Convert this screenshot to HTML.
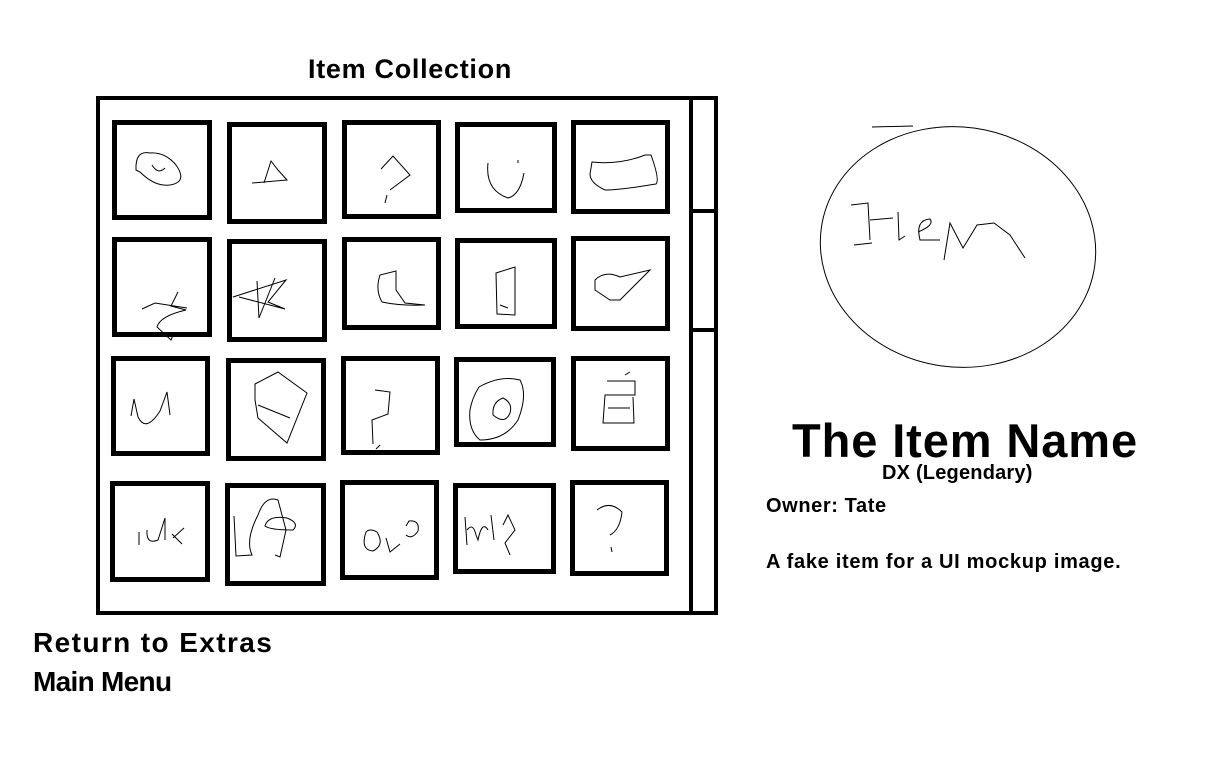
<!DOCTYPE html>
<html><head><style>
body{margin:0;width:1232px;height:758px;background:#fff;position:relative;overflow:hidden;font-family:"Liberation Sans",sans-serif;font-weight:bold;color:#000}
.t{position:absolute;white-space:nowrap;line-height:1}
.b{position:absolute;border:5px solid #000;box-sizing:border-box}
</style></head><body>
<div class="t" style="left:308px;top:56px;font-size:27px;letter-spacing:0.7px">Item Collection</div>
<div class="b" style="left:96px;top:96px;width:622px;height:519px;border-width:4px"></div>
<div style="position:absolute;left:689px;top:96px;width:4px;height:519px;background:#000"></div>
<div style="position:absolute;left:689px;top:209px;width:28px;height:4px;background:#000"></div>
<div style="position:absolute;left:689px;top:328px;width:28px;height:4px;background:#000"></div>

<div class="b" style="left:112px;top:120px;width:100px;height:100px"></div>
<div class="b" style="left:227px;top:122px;width:100px;height:102px"></div>
<div class="b" style="left:342px;top:120px;width:99px;height:99px"></div>
<div class="b" style="left:455px;top:122px;width:102px;height:91px"></div>
<div class="b" style="left:571px;top:120px;width:99px;height:94px"></div>

<div class="b" style="left:112px;top:237px;width:100px;height:100px"></div>
<div class="b" style="left:227px;top:239px;width:100px;height:103px"></div>
<div class="b" style="left:342px;top:237px;width:99px;height:93px"></div>
<div class="b" style="left:455px;top:238px;width:102px;height:91px"></div>
<div class="b" style="left:571px;top:236px;width:99px;height:95px"></div>

<div class="b" style="left:111px;top:356px;width:99px;height:100px"></div>
<div class="b" style="left:226px;top:358px;width:100px;height:103px"></div>
<div class="b" style="left:341px;top:356px;width:99px;height:99px"></div>
<div class="b" style="left:454px;top:357px;width:102px;height:90px"></div>
<div class="b" style="left:571px;top:356px;width:99px;height:95px"></div>

<div class="b" style="left:110px;top:481px;width:100px;height:101px"></div>
<div class="b" style="left:225px;top:483px;width:101px;height:103px"></div>
<div class="b" style="left:340px;top:480px;width:99px;height:100px"></div>
<div class="b" style="left:453px;top:483px;width:103px;height:91px"></div>
<div class="b" style="left:570px;top:480px;width:99px;height:96px"></div>

<svg style="position:absolute;left:0;top:0" width="1232" height="758" fill="none" stroke="#000" stroke-width="1">
<path d="M136 170 Q135 150 150 153 Q165 152 176 165 Q188 182 170 185 Q155 187 140 172 Z M152 165 Q158 175 165 168"/>
<path d="M252 183 L287 180 L278 170 L271 161 L264 183"/>
<path d="M381 169 L393 156 L410 175 L398 184 L390 190 M387 195 L385 203"/>
<path d="M488 163 Q485 190 508 198 Q520 195 524 173 M518 160 L518 163"/>
<path d="M592 162 Q620 165 645 155 L651 155 Q660 180 656 184 Q620 190 605 190 Q590 183 590 174 Z"/>
<path d="M142 309 L155 303 L187 308 M178 292 L171 306 L186 310 Q160 316 157 327 L171 340 L174 333"/>
<path d="M233 297 L286 280 L268 302 L285 309 L239 297 M257 281 L259 318 L275 278"/>
<path d="M380 275 L396 271 L396 290 L405 303 L425 305 Q400 306 382 302 Q375 290 380 275 Z"/>
<path d="M496 273 L515 267 L515 315 L497 314 Z M500 305 L508 308"/>
<path d="M595 280 Q605 270 620 277 L650 270 L620 300 L610 300 L595 290 Z"/>
<path d="M131 416 L134 399 L138 417 Q146 433 160 411 L167 392 L170 415"/>
<path d="M255 384 L278 372 L307 393 L287 443 L258 418 L255 400 Z M258 405 L290 418"/>
<path d="M376 449 L380 445 M373 444 L372 420 L388 414 L390 392 L375 390"/>
<path d="M479 387 Q500 375 520 380 Q528 395 518 420 Q505 440 480 440 Q468 430 470 410 Q472 398 479 387 Z M503 398 Q492 402 493 415 Q505 425 510 413 Q513 403 503 398 Z"/>
<path d="M607 381 L635 381 L635 395 L605 395 L603 423 L634 423 L633 397 M608 408 L630 408 M625 375 L630 372"/>
<path d="M139 532 L139 545 M147 530 Q146 545 158 540 L165 518 L165 540 M172 534 L182 544 M173 538 L184 528"/>
<path d="M234 516 L236 556 L252 555 Q245 540 258 515 Q265 495 278 500 L286 530 L280 557 L275 555 M265 526 Q268 515 287 518 Q300 523 293 530 Q270 530 265 526 Z"/>
<path d="M366 532 Q360 550 373 551 Q385 545 377 532 Q370 528 366 532 Z M386 538 L390 552 L400 544 M406 526 L409 521 Q420 520 418 531 Q412 540 406 535"/>
<path d="M465 517 L467 545 M467 530 Q473 522 476 535 L478 540 Q482 520 488 530 M491 515 L494 540 M503 525 L508 515 L515 530 L505 543 L510 555"/>
<path d="M597 510 Q610 500 622 512 Q620 530 610 535 M611 547 L612 552"/>
<ellipse cx="958" cy="247" rx="138" ry="120" transform="rotate(8 958 247)"/>
<path d="M872 127 L913 126 M851 205 L868 203 L870 240 M854 245 L872 243 M870 220 L893 218 M898 212 L899 240 L905 236 M918 232 Q935 225 930 219 Q915 220 920 240 L940 240 M944 260 L950 223 L963 248 L977 225 L994 223 L1010 235 L1025 258"/>
</svg>

<div class="t" style="left:792px;top:417px;font-size:47px;letter-spacing:0.9px">The Item Name</div>
<div class="t" style="left:882px;top:463px;font-size:20px;letter-spacing:0.2px">DX (Legendary)</div>
<div class="t" style="left:766px;top:496px;font-size:20px;letter-spacing:0.6px">Owner: Tate</div>
<div class="t" style="left:766px;top:552px;font-size:20px;letter-spacing:0.7px">A fake item for a UI mockup image.</div>
<div class="t" style="left:33px;top:629px;font-size:28px;letter-spacing:1.4px">Return to Extras</div>
<div class="t" style="left:33px;top:668px;font-size:28px;letter-spacing:-0.7px">Main Menu</div>
</body></html>
